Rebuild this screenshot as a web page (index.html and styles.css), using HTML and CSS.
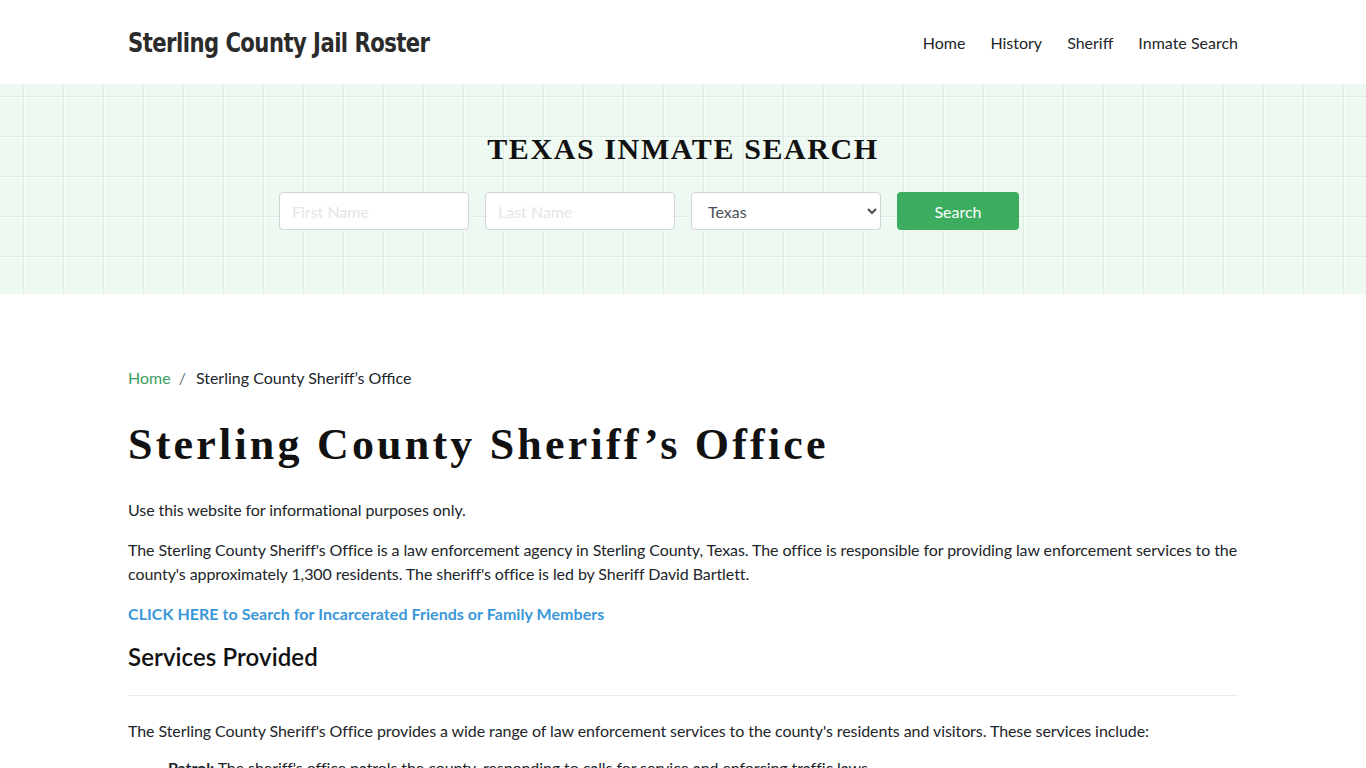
FILE: index.html
```html
<!DOCTYPE html>
<html lang="en">
<head>
<meta charset="utf-8">
<title>Sterling County Sheriff’s Office</title>
<link rel="stylesheet" href="styles.css">
</head>
<body>
<header class="site-header">
  <div class="container header-inner">
    <a class="brand" href="#">Sterling County Jail Roster</a>
    <nav class="main-nav">
      <a href="#">Home</a>
      <a href="#">History</a>
      <a href="#">Sheriff</a>
      <a href="#">Inmate Search</a>
    </nav>
  </div>
</header>

<section class="hero">
  <h2 class="hero-title">TEXAS INMATE SEARCH</h2>
  <form class="search-form">
    <input class="field" type="text" placeholder="First Name">
    <input class="field" type="text" placeholder="Last Name">
    <select class="field select">
      <option>Texas</option>
    </select>
    <button class="btn" type="button">Search</button>
  </form>
</section>

<main class="container content">
  <div class="breadcrumb">
    <a href="#">Home</a><span class="sep">/</span><span>Sterling County Sheriff’s Office</span>
  </div>
  <h1 class="page-title">Sterling County Sheriff’s Office</h1>
  <p>Use this website for informational purposes only.</p>
  <p>The Sterling County Sheriff's Office is a law enforcement agency in Sterling County, Texas. The office is responsible for providing law enforcement services to the county's approximately 1,300 residents. The sheriff's office is led by Sheriff David Bartlett.</p>
  <p><a class="cta" href="#">CLICK HERE to Search for Incarcerated Friends or Family Members</a></p>
  <h2 class="section-title">Services Provided</h2>
  <hr class="rule">
  <p class="lead-in">The Sterling County Sheriff's Office provides a wide range of law enforcement services to the county's residents and visitors. These services include:</p>
  <ul class="services">
    <li><strong>Patrol:</strong> The sheriff's office patrols the county, responding to calls for service and enforcing traffic laws.</li>
  </ul>
</main>
</body>
</html>
```

FILE: styles.css
```css
* { box-sizing: border-box; }

body {
  margin: 0;
  font-family: Lato, "Open Sans", sans-serif;
  font-size: 16px;
  line-height: 24px;
  letter-spacing: -0.08px;
  color: #212529;
  background: #fff;
}

a { text-decoration: none; }

.container {
  width: 1110px;
  margin: 0 auto;
}

/* header */
.site-header { height: 84px; background: #fff; }

.header-inner {
  height: 84px;
  display: flex;
  align-items: center;
  justify-content: space-between;
}

.brand {
  font-family: "DejaVu Sans Condensed", "DejaVu Sans", sans-serif;
  font-weight: bold;
  font-size: 26px;
  letter-spacing: -0.6px;
  color: #2b2b2b;
  transform: scaleX(0.905);
  transform-origin: left center;
  white-space: nowrap;
  margin-top: 2px;
}

.main-nav {
  display: flex;
  gap: 25px;
  margin-top: 2px;
}

.main-nav a {
  color: #212529;
  font-size: 16px;
  letter-spacing: 0;
}

/* search band */
.hero {
  height: 210px;
  background-color: #eef9f2;
  background-image:
    linear-gradient(to right, rgba(165, 200, 180, 0.22) 1px, transparent 1px),
    linear-gradient(to bottom, rgba(165, 200, 180, 0.22) 1px, transparent 1px),
    linear-gradient(to right, rgba(255, 255, 255, 0.55) 1px, transparent 1px),
    linear-gradient(to bottom, rgba(255, 255, 255, 0.55) 1px, transparent 1px);
  background-size: 40px 40px, 40px 40px, 40px 40px, 40px 40px;
  background-position: 23px 12px, 23px 12px, 24px 13px, 24px 13px;
  display: flex;
  flex-direction: column;
  align-items: center;
  padding-top: 48px;
}

.hero-title {
  margin: 0;
  font-family: "Liberation Serif", "Times New Roman", serif;
  font-weight: bold;
  font-size: 30px;
  line-height: 34px;
  letter-spacing: 1.6px;
  color: #111;
}

.search-form {
  display: flex;
  gap: 16px;
  margin-top: 26px;
  margin-right: 68px;
}

.field {
  width: 190px;
  height: 38px;
  border: 1px solid #ced4da;
  border-radius: 4px;
  background: #fff;
  padding: 0 12px;
  font-family: Lato, sans-serif;
  font-size: 16px;
  color: #495057;
}

.field::placeholder { color: #e4e6e8; }

.select { padding: 0 8px 0 12px; }

.btn {
  width: 122px;
  height: 38px;
  border: 0;
  border-radius: 4px;
  background: #3cad5f;
  color: #fff;
  font-family: Lato, sans-serif;
  font-size: 16px;
}

/* article */
.content { padding-top: 72px; }

.breadcrumb {
  display: flex;
  color: #212529;
  letter-spacing: 0;
}

.breadcrumb a { color: #3c9d61; }

.breadcrumb .sep {
  padding: 0 10px 0 8px;
  color: #6c757d;
}

.page-title {
  margin: 29px 0 0;
  font-family: "Liberation Serif", "Times New Roman", serif;
  font-weight: bold;
  font-size: 44px;
  line-height: 52px;
  letter-spacing: 3.2px;
  color: #111;
}

.content p { margin: 0 0 16px; }

.page-title + p { margin-top: 27px; }

.cta {
  color: #3a97d8;
  font-weight: bold;
  letter-spacing: 0.05px;
}

.section-title {
  margin: 12px 0 0;
  font-family: Lato, sans-serif;
  font-weight: 600;
  font-size: 24px;
  line-height: 30px;
  letter-spacing: 0.1px;
  color: #111;
}

.rule {
  border: 0;
  border-top: 1px solid #e9ecef;
  margin: 23px 0 23px;
}

.content .lead-in { margin-bottom: 13px; }

.services {
  margin: 0;
  padding-left: 40px;
}

.services li { list-style: none; }
```
